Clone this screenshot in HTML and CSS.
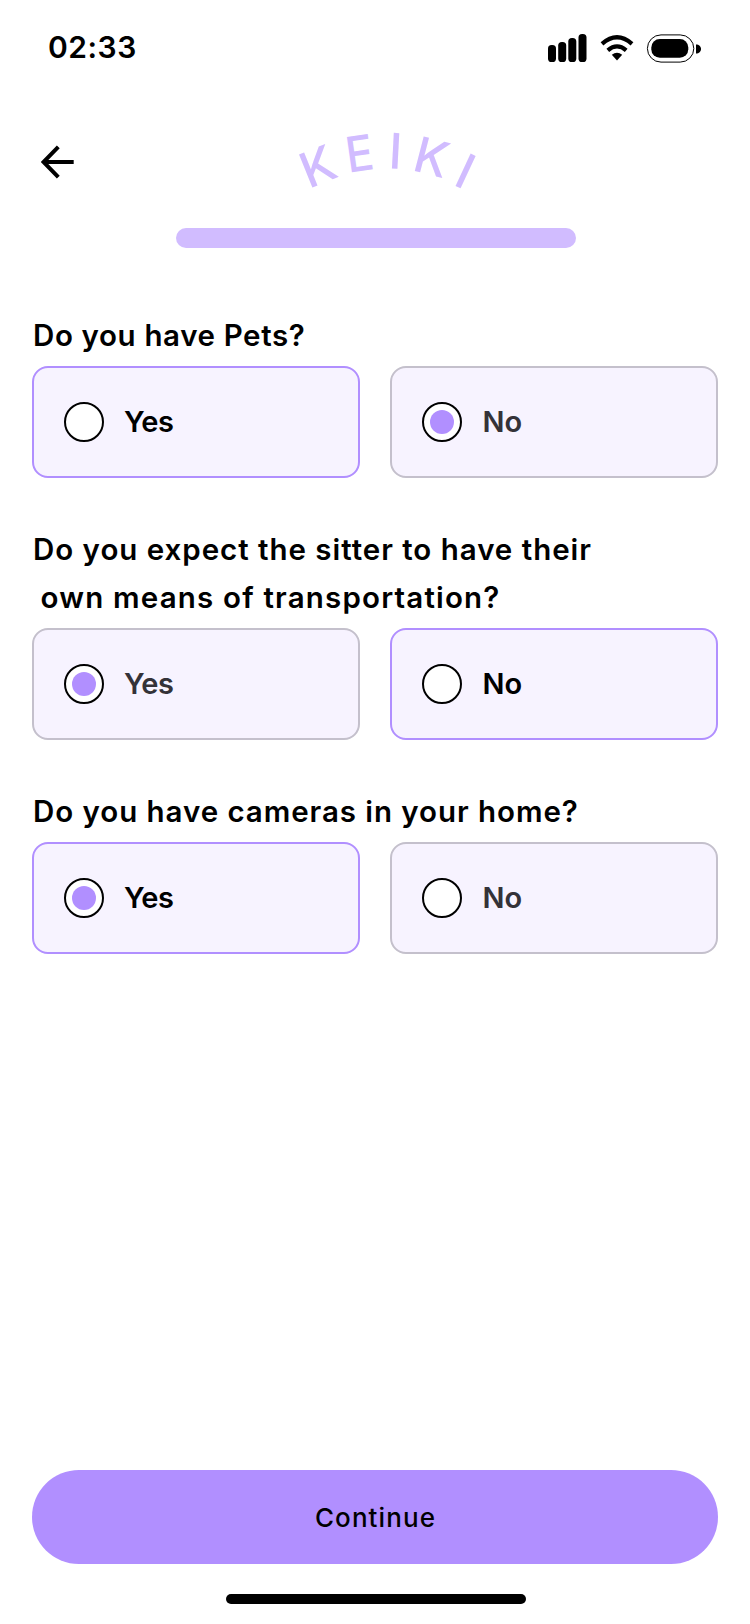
FILE: index.html
```html
<!DOCTYPE html>
<html lang="en">
<head>
<meta charset="utf-8">
<title>Keiki</title>
<link rel="stylesheet" href="styles.css">
</head>
<body>
<div class="screen">
  <header class="status">
    <span class="time">02:33</span>
    <svg class="status-icons" width="154" height="30" viewBox="548 33 154 30">
      <rect x="548" y="45" width="8" height="17" rx="3.6"/>
      <rect x="558.2" y="42" width="8" height="20" rx="3.6"/>
      <rect x="568.3" y="38" width="8" height="24" rx="3.6"/>
      <rect x="578.5" y="34" width="8" height="28" rx="3.6"/>
      <g fill="none" stroke="#000" stroke-width="4.2">
        <path d="M602 43.8Q617 30.6 632 43.8"/>
        <path d="M607.8 50.3Q617 42.6 626.2 50.3"/>
      </g>
      <path d="M611.8 54.8Q617 50.8 622.2 54.8L617 60.4Z"/>
      <rect x="647.4" y="34.9" width="46.4" height="27.2" rx="13.6" fill="none" stroke="#000"/>
      <rect x="651.3" y="39" width="37" height="18.8" rx="8.5"/>
      <path d="M696 44.5C699 44.5 701 46.5 701 49S699 53.6 696 53.6Z"/>
    </svg>
  </header>
  <nav class="topbar">
    <svg class="back" width="34" height="34" viewBox="0 0 34 34"><path d="M32.7 17H3M17.3 1.8L2.5 17L17.3 32.2"/></svg>
    <svg class="logo" width="190" height="62" viewBox="293 130 190 62">
      <text transform="translate(312.7 187.3) rotate(-22)" x="-4.4">K</text>
      <text transform="translate(352.3 172.2) rotate(-8) scale(.93 1)" x="-4.4">E</text>
      <text transform="translate(392.3 168.6) rotate(3)" x="-4.4">I</text>
      <text transform="translate(415.3 171.2) rotate(14.5)" x="-4.4">K</text>
      <text transform="translate(456 186) rotate(25)" x="-4.4">I</text>
    </svg>
  </nav>
  <div class="progress"></div>
  <main class="form">
    <section class="group">
      <h2 class="question q1">Do you have Pets?</h2>
      <div class="options">
        <div class="option active"><span class="radio"></span><span class="label yes">Yes</span></div>
        <div class="option"><span class="radio checked"></span><span class="label">No</span></div>
      </div>
    </section>
    <section class="group">
      <h2 class="question"><span class="q2">Do you expect the sitter to have their</span><br><span class="q3"> own means of transportation?</span></h2>
      <div class="options">
        <div class="option"><span class="radio checked"></span><span class="label yes">Yes</span></div>
        <div class="option active"><span class="radio"></span><span class="label">No</span></div>
      </div>
    </section>
    <section class="group">
      <h2 class="question q4">Do you have cameras in your home?</h2>
      <div class="options">
        <div class="option active"><span class="radio checked"></span><span class="label yes">Yes</span></div>
        <div class="option"><span class="radio"></span><span class="label">No</span></div>
      </div>
    </section>
  </main>
  <footer class="footer">
    <button class="continue">Continue</button>
    <div class="home"></div>
  </footer>
</div>
</body>
</html>
```
FILE: styles.css
```css
* { box-sizing: border-box; }
body { margin: 0; background: #fff; color: #000; font-family: Inter, "Liberation Sans", sans-serif; }
svg { display: block; }
.screen { height: 1624px; display: flex; flex-direction: column; }
.status { height: 96px; padding: 33px 48px 0 48px; display: flex; justify-content: space-between; align-items: flex-start; }
.time { font-size: 30px; line-height: 29px; font-weight: 600; letter-spacing: .5px; }
.topbar { height: 132px; padding: 34px 0 0 41px; display: flex; align-items: flex-start; }
.back { margin-top: 15px; fill: none; stroke: #000; stroke-width: 4; }
.logo { margin-left: 218px; fill: #d1bcff; font-size: 49px; font-weight: 500; overflow: visible; }
.progress { width: 400px; height: 20px; margin-left: 176px; border-radius: 10px; background: #d1bcff; }
.form { padding: 63px 32px 0; display: flex; flex-direction: column; gap: 47px; }
.question { margin: 0 0 7px; padding-left: 1px; font-size: 29.5px; line-height: 48px; font-weight: 600; white-space: pre; font-variant-ligatures: none; }
.q1 { letter-spacing: .63px; }
.q2 { letter-spacing: .97px; }
.q3 { letter-spacing: 1.18px; margin-left: -1px; }
.q4 { letter-spacing: .94px; }
.options { display: grid; grid-template-columns: 1fr 1fr; gap: 30px; }
.option { height: 112px; padding-left: 30px; display: flex; align-items: center; gap: 20px; border: 2px solid #c4c0cc; border-radius: 16px; background: #f7f3ff; color: #343238; }
.option.active { border-color: #b18fff; color: #000; }
.radio { width: 40px; height: 40px; display: grid; place-items: center; border: 2px solid #000; border-radius: 50%; background: #fff; }
.radio.checked::after { content: ""; width: 24px; height: 24px; border-radius: 50%; background: #b18fff; }
.label { padding-left: .5px; font-size: 29px; line-height: 40px; font-weight: 600; }
.label.yes { padding-left: 0; letter-spacing: -.5px; }
.footer { margin-top: auto; padding: 0 32px 20px; display: flex; flex-direction: column; align-items: center; gap: 30px; }
.continue { width: 100%; height: 94px; padding: 0 0 0 1px; border: 0; border-radius: 47px; background: #b18fff; color: #000; font: 500 26px Inter, "Liberation Sans", sans-serif; letter-spacing: 1.1px; }
.home { width: 300px; height: 10px; margin-left: 2px; border-radius: 5px; background: #000; }
```
